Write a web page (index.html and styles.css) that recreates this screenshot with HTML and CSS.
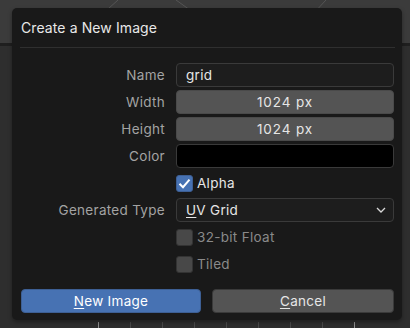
FILE: index.html
```html
<!DOCTYPE html>
<html>
<head>
  <title>Create a New Image</title>
  <link rel="stylesheet" href="styles.css">
</head>
<body>
  <div class="screen">
    <div class="viewport">
      <svg class="grid-lines" width="410" height="43" viewBox="0 0 410 43">
        <line x1="118" y1="0" x2="70" y2="43" />
        <line x1="176" y1="0" x2="236" y2="43" />
        <line x1="326" y1="0" x2="286" y2="43" />
      </svg>
    </div>
    <div class="divider"></div>
    <div class="ruler">
      <span class="tick major"></span>
      <span class="tick"></span>
      <span class="tick"></span>
      <span class="tick"></span>
      <span class="tick"></span>
      <span class="tick"></span>
      <span class="tick"></span>
      <span class="tick"></span>
      <span class="tick major"></span>
    </div>

    <div class="dialog">
      <div class="dialog-title">Create a New Image</div>
      <div class="separator"></div>

      <div class="form">
        <label class="label">Name</label>
        <div class="field text-field">grid</div>

        <label class="label">Width</label>
        <div class="field num-field">1024 px</div>

        <label class="label">Height</label>
        <div class="field num-field">1024 px</div>

        <label class="label">Color</label>
        <div class="field color-field"></div>

        <span></span>
        <div class="check-row">
          <span class="checkbox checked">
            <svg width="17" height="17" viewBox="0 0 17 17"><path d="M3.5 8.8 L7 12.2 L13.5 4.6" /></svg>
          </span>
          <span class="check-label">Alpha</span>
        </div>

        <label class="label">Generated Type</label>
        <div class="field dropdown">
          <span><u>U</u>V Grid</span>
          <svg class="chevron" width="10" height="6" viewBox="0 0 10 6"><path d="M1 1 L5 5 L9 1" /></svg>
        </div>

        <span></span>
        <div class="check-row disabled">
          <span class="checkbox"></span>
          <span class="check-label">32-bit Float</span>
        </div>

        <span></span>
        <div class="check-row disabled">
          <span class="checkbox"></span>
          <span class="check-label">Tiled</span>
        </div>
      </div>

      <div class="buttons">
        <button class="btn primary"><u>N</u>ew Image</button>
        <button class="btn"><u>C</u>ancel</button>
      </div>
    </div>
  </div>
</body>
</html>
```

FILE: styles.css
```css
body {
  margin: 0;
  background-color: #2e2e2e;
  font-family: Inter, "Noto Sans", sans-serif;
  color: #e6e6e6;
}
.screen {
  position: relative;
  width: 410px;
  height: 328px;
  overflow: hidden;
  background-color: #2e2e2e;
}
.viewport {
  height: 43px;
  background-color: #3b3b3b;
}
.grid-lines {
  display: block;
}
.grid-lines line {
  stroke: #555555;
  stroke-width: 1;
}
.divider {
  height: 3px;
  background-color: #1f1f1f;
}
.ruler {
  position: absolute;
  left: 98px;
  bottom: 0;
  display: flex;
  gap: 31px;
  height: 6px;
}
.tick {
  width: 1px;
  height: 6px;
  background-color: #4a4a4a;
}
.tick.major {
  background-color: #8f8f8f;
}
.dialog {
  position: absolute;
  left: 12px;
  top: 8px;
  width: 390px;
  height: 312px;
  box-sizing: border-box;
  background-color: #191919;
  border-radius: 5px;
  box-shadow: 0 2px 4px rgba(0, 0, 0, 0.35);
  padding: 0 8px;
}
.dialog-title {
  font-size: 14px;
  letter-spacing: 0.1px;
  line-height: 18px;
  padding: 11px 0 0 1px;
  height: 28px;
  color: #e8e8e8;
}
.separator {
  height: 1px;
  background-color: #2f2f2f;
  margin-right: -1px;
}
.form {
  display: grid;
  grid-template-columns: 145px 218px;
  column-gap: 11px;
  row-gap: 3px;
  grid-auto-rows: 24px;
  margin-top: 15px;
}
.label {
  font-size: 13.5px;
  letter-spacing: 0.3px;
  color: #a3a3a3;
  text-align: right;
  line-height: 24px;
}
.field {
  box-sizing: border-box;
  border-radius: 4px;
  font-size: 13.5px;
  letter-spacing: 0.3px;
  line-height: 22px;
  border: 1px solid #3a3a3a;
}
.text-field {
  background-color: #1d1d1d;
  padding-left: 9px;
}
.num-field {
  background-color: #545454;
  border-color: #4a4a4a;
  text-align: center;
  letter-spacing: 0.9px;
}
.color-field {
  background-color: #000000;
}
.check-row {
  display: flex;
  align-items: center;
  gap: 4px;
  font-size: 13.5px;
  letter-spacing: 0.3px;
}
.checkbox {
  width: 17px;
  height: 17px;
  border-radius: 3px;
  background-color: #545454;
  border: 1px solid #3a3a3a;
  box-sizing: border-box;
  display: flex;
}
.checkbox.checked {
  background-color: #4772b3;
  border-color: #3d5f94;
}
.checkbox svg {
  margin: -1px;
}
.checkbox path {
  fill: none;
  stroke: #ffffff;
  stroke-width: 2;
}
.disabled .checkbox {
  background-color: #484848;
  border-color: #333333;
}
.disabled .check-label {
  color: #8a8a8a;
}
.dropdown {
  background-color: #1d1d1d;
  padding: 0 7px 0 9px;
  display: flex;
  justify-content: space-between;
  align-items: center;
}
.dropdown u,
.btn u {
  text-underline-offset: 2px;
}
.chevron path {
  fill: none;
  stroke: #d8d8d8;
  stroke-width: 1.3;
}
.buttons {
  display: grid;
  grid-template-columns: 180px 182px;
  column-gap: 11px;
  margin: 13px 0 0 1px;
}
.btn {
  height: 24px;
  border-radius: 4px;
  border: 1px solid #3a3a3a;
  background-color: #545454;
  color: #e6e6e6;
  font-family: Inter, "Noto Sans", sans-serif;
  font-size: 13.5px;
  letter-spacing: 0.3px;
  padding: 0;
}
.btn.primary {
  background-color: #4772b3;
  border-color: #3d5f94;
  color: #ffffff;
}
```
